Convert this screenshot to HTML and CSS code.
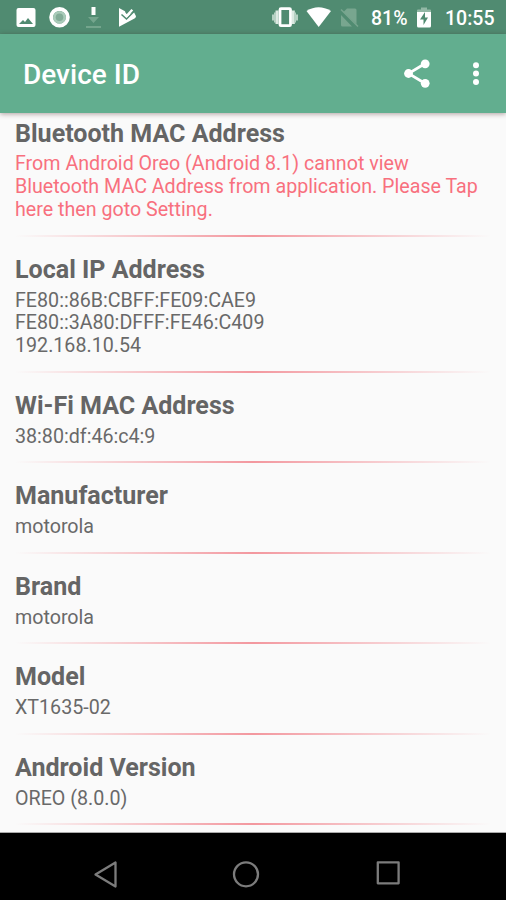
FILE: index.html
```html
<!DOCTYPE html>
<html lang="en">
<head>
<meta charset="utf-8">
<title>Device ID</title>
<link rel="stylesheet" href="styles.css">
</head>
<body>
<header class="status">
  <svg class="icons" width="150" height="34" viewBox="0 0 150 34" fill="#fff">
    <path fill-rule="evenodd" d="M18.5 8h15q2 0 2 2v15q0 2-2 2h-15q-2 0-2-2v-15q0-2 2-2zM19 24h14l-5-6-3 4-2-2z"/>
    <circle cx="59.5" cy="17.3" r="8.3" fill="none" stroke="#fff" stroke-width="4"/>
    <circle cx="59.5" cy="17.3" r="6.4" fill="#a9cbb9"/>
    <circle cx="59.5" cy="17.3" r="3.8" fill="#82ac97"/>
    <path d="M91.5 7h4v8h-4z"/>
    <path d="M88 17h11l-5.5 6zM86 26h15v2h-15z" fill="#74a58d"/>
    <path d="M119 8l6 3.3 1 4 8-3 2 4q0 1.500-1.500 2.200L119 26.700z"/>
    <path d="M121.500 14.500l5 4.500 8-8" fill="none" stroke="#508b71" stroke-width="1.500"/>
    <path d="M123.500 12.500l3.300 3.300 5.500-6" fill="none" stroke="#fff" stroke-width="2.400"/>
  </svg>
  <div class="status-right">
    <svg width="90" height="34" viewBox="270 0 90 34">
      <path d="M277 10.500v13.500M293.300 10.500v13.500" stroke="#dce9e2" stroke-width="3"/>
      <path d="M273 14.500v6M297 14.500v6M275 12.500v10M295 12.500v10" stroke="#b5d1c3" stroke-width="2"/>
      <rect x="280" y="8.700" width="10.500" height="17" rx="1" fill="none" stroke="#fff" stroke-width="2.800"/>
      <path d="M306.500 11q12-7.500 24.500 0L318.700 27z" fill="#fff"/>
      <path d="M347 8.500h8q1.500 0 1.500 1.500v14L343.500 12zM341 15l11 11.500h-9.500q-1.500 0-1.500-1.500z" fill="#78a68f"/>
      <path d="M341 9.500l17 17" stroke="#78a68f" stroke-width="1.500"/>
    </svg>
    <span class="battery">81%</span>
    <svg class="cell" width="16" height="34" viewBox="0 0 16 34">
      <path d="M5 7.500h6v2h3q1 0 1 1v4H1v-4q0-1 1-1h3z" fill="#92b8a5"/>
      <path d="M1 12h14v14q0 1.500-1.500 1.500h-11Q1 27.500 1 26z" fill="#fff"/>
      <path d="M9 12l-5 7.500h3.500V25l4.500-7.500H9z" fill="#508b71"/>
    </svg>
    <span class="clock">10:55</span>
  </div>
</header>
<div class="bar">
  <h1>Device ID</h1>
  <svg width="106" height="79" viewBox="400 34 106 79" fill="#fff">
    <path d="M425.200 63.500L408.500 73.500l16.700 10" fill="none" stroke="#fff" stroke-width="2.700"/>
    <circle cx="425.200" cy="63.800" r="4.400"/><circle cx="408.500" cy="73.500" r="4.400"/><circle cx="425.200" cy="83.300" r="4.400"/>
    <circle cx="476" cy="65.300" r="3"/><circle cx="476" cy="73.600" r="3"/><circle cx="476" cy="82" r="3"/>
  </svg>
</div>
<main class="list">
  <section class="item"><h2>Bluetooth MAC Address</h2><p class="warn">From Android Oreo (Android 8.1) cannot view<br>Bluetooth MAC Address from application. Please Tap<br>here then goto Setting.</p></section>
  <section class="item"><h2>Local IP Address</h2><p>FE80::86B:CBFF:FE09:CAE9<br>FE80::3A80:DFFF:FE46:C409<br>192.168.10.54</p></section>
  <section class="item"><h2>Wi-Fi MAC Address</h2><p>38:80:df:46:c4:9</p></section>
  <section class="item"><h2>Manufacturer</h2><p>motorola</p></section>
  <section class="item"><h2>Brand</h2><p>motorola</p></section>
  <section class="item"><h2>Model</h2><p>XT1635-02</p></section>
  <section class="item"><h2>Android Version</h2><p>OREO (8.0.0)</p></section>
</main>
<nav class="nav">
  <svg width="506" height="67" viewBox="0 833 506 67" fill="none" stroke="#7c7c7c" stroke-width="2.300" stroke-linejoin="round">
    <path d="M115.500 862.500v24L95.500 874.500z"/>
    <circle cx="246" cy="874.300" r="12"/>
    <rect x="377.800" y="862.300" width="20.800" height="21"/>
  </svg>
</nav>
</body>
</html>
```
FILE: styles.css
```css
* { box-sizing: border-box; }
body {
  margin: 0;
  width: 506px;
  height: 900px;
  overflow: hidden;
  display: flex;
  flex-direction: column;
  background: #fafafa;
  font-family: Roboto, "Liberation Sans", sans-serif;
}
svg { display: block; flex: none; }
.status {
  height: 34px;
  flex: none;
  display: flex;
  justify-content: space-between;
  background: #508b71;
  color: #fff;
}
.status-right {
  width: 236px;
  display: flex;
  font-size: 19.500px;
  font-weight: 500;
  line-height: 37px;
  white-space: nowrap;
}
.battery { width: 56px; padding-left: 11px; }
.cell { width: 16px; }
.clock { padding-left: 13px; }
.bar {
  height: 79px;
  flex: none;
  display: flex;
  justify-content: space-between;
  padding-left: 23px;
  background: #62ae8f;
  color: #fff;
  box-shadow: 0 1px 5px rgba(60, 20, 20, .4);
  z-index: 1;
}
h1 {
  margin: 0;
  font-size: 28px;
  font-weight: 500;
  line-height: 82px;
}
.list {
  height: 720px;
  flex: none;
  overflow: hidden;
  padding: 0 15px;
}
.item { padding-top: 18.900px; }
.item::after {
  content: "";
  display: block;
  height: 2px;
  margin-top: 12.900px;
  background: linear-gradient(90deg, rgba(240, 110, 120, 0), rgba(240, 110, 120, .7) 50%, rgba(240, 110, 120, 0));
}
.item:first-child { padding-top: 6.500px; }
h2 {
  margin: 0 0 5.850px;
  font-size: 25.050px;
  font-weight: 700;
  line-height: 28px;
  color: #656565;
  white-space: nowrap;
}
p {
  margin: 0;
  font-size: 19.660px;
  line-height: 22.850px;
  color: #696969;
  white-space: nowrap;
}
.warn { color: #f8707e; }
.nav {
  height: 67px;
  flex: none;
  background: #000;
  box-shadow: 0 -1px 0 #aaa;
}
```
